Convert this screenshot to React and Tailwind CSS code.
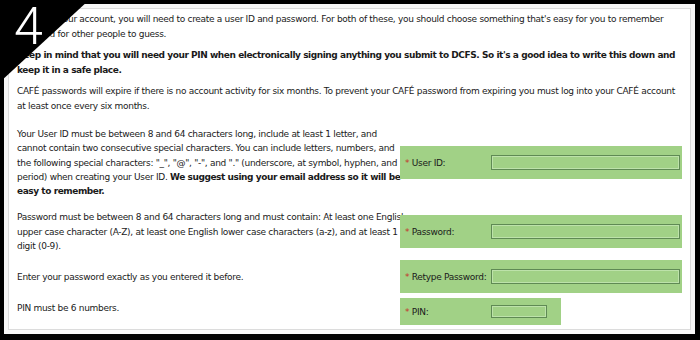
// Account setup step with form fields for user ID, password and PIN
function FieldCell({ label, wide = true }) {
  return (
    <div
      className={
        wide
          ? 'flex h-[33px] w-[282px] shrink-0 items-center bg-[#a1d186] pl-[5px]'
          : 'flex h-[27px] w-[161px] shrink-0 items-center bg-[#a1d186] pl-[5px]'
      }
    >
      <span className="w-[86px] shrink-0 whitespace-nowrap">
        <span className="text-[#c2362b]">*</span> {label}
      </span>
      <input
        type="text"
        className={
          wide
            ? 'h-[15px] w-[189px] border border-[#5f8a54] bg-transparent shadow-[inset_0_0_0_1px_#bde2aa] outline-none'
            : 'h-[13px] w-[56px] border border-[#5f8a54] bg-transparent shadow-[inset_0_0_0_1px_#bde2aa] outline-none'
        }
      />
    </div>
  );
}

export default function App() {
  return (
    <div className="relative h-[340px] w-[700px] overflow-hidden bg-white font-['DejaVu_Sans',sans-serif] text-[9px] leading-[15px] tracking-[-0.3px] text-[#1a1a1a]">
      <div className="h-full w-full border-b-[6px] border-l-4 border-r-[5px] border-t-4 border-black bg-[#f7f7f7] p-1">
        <div className="h-full w-full whitespace-nowrap border border-[#dcdcdc] bg-white pl-2 pt-[3px]">
          <p className="mb-[6px]">
            To create your account, you will need to create a user ID and password. For both of these, you should choose something that's easy for you to remember
            <br />
            and hard for other people to guess.
          </p>
          <p className="mb-[6px] font-bold tracking-[-0.44px]">
            Keep in mind that you will need your PIN when electronically signing anything you submit to DCFS. So it's a good idea to write this down and
            <br />
            keep it in a safe place.
          </p>
          <p>
            CAFÉ passwords will expire if there is no account activity for six months. To prevent your CAFÉ password from expiring you must log into your CAFÉ account
            <br />
            at least once every six months.
          </p>

          <div className="mt-[13px] flex flex-col leading-[14.3px]">
            <div className="flex items-center">
              <div className="w-[383px] shrink-0">
                Your User ID must be between 8 and 64 characters long, include at least 1 letter, and
                <br />
                cannot contain two consecutive special characters. You can include letters, numbers, and
                <br />
                the following special characters: "_", "@", "-", and "." (underscore, at symbol, hyphen, and
                <br />
                period) when creating your User ID.{' '}
                <b className="tracking-[-0.44px]">We suggest using your email address so it will be</b>
                <br />
                <b className="tracking-[-0.44px]">easy to remember.</b>
              </div>
              <FieldCell label="User ID:" />
            </div>

            <div className="mt-[12px] flex items-center">
              <div className="w-[383px] shrink-0">
                Password must be between 8 and 64 characters long and must contain: At least one English
                <br />
                upper case character (A-Z), at least one English lower case characters (a-z), and at least 1
                <br />
                digit (0-9).
              </div>
              <FieldCell label="Password:" />
            </div>

            <div className="mt-[7px] flex items-center">
              <div className="w-[383px] shrink-0">Enter your password exactly as you entered it before.</div>
              <FieldCell label="Retype Password:" />
            </div>

            <div className="mt-[5px] flex items-start">
              <div className="w-[383px] shrink-0 pt-[3px]">PIN must be 6 numbers.</div>
              <FieldCell label="PIN:" wide={false} />
            </div>
          </div>
        </div>
      </div>

      {/* step badge in the corner */}
      <svg className="absolute left-0 top-0" width="90" height="84" viewBox="0 0 90 84">
        <polygon points="0,0 89,0 0,82" fill="#000" />
      </svg>
      <span className="absolute left-[14px] top-[1px] font-['Roboto',sans-serif] text-[52px] font-light leading-none text-white">
        4
      </span>
    </div>
  );
}
